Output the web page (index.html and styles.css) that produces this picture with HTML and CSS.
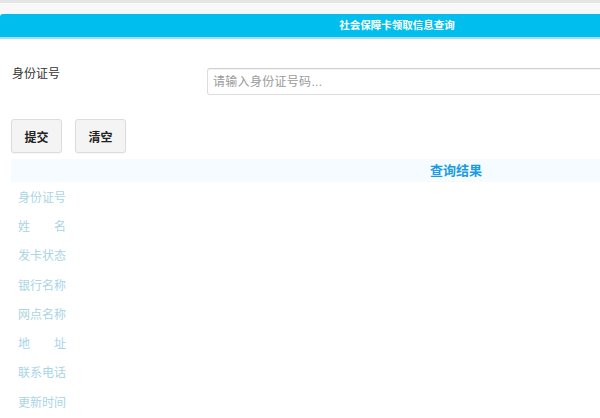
FILE: index.html
```html
<!DOCTYPE html>
<html lang="zh-CN">
<head>
    <meta charset="UTF-8">
    <meta name="viewport" content="width=device-width, initial-scale=1.0">
    <title>社会保障卡领取信息查询</title>
    <link rel="stylesheet" href="styles.css">
</head>
<body>
    <div class="page">
        <div class="header">社会保障卡领取信息查询</div>

        <form class="query-form">
            <div class="form-row">
                <label for="idcard">身份证号</label>
                <input type="text" id="idcard" name="idcard" placeholder="请输入身份证号码...">
            </div>
            <div class="actions">
                <button type="submit" class="btn">提交</button>
                <button type="reset" class="btn">清空</button>
            </div>
        </form>

        <div class="result">
            <div class="result-title">查询结果</div>
            <div class="result-row"><span class="result-label">身份证号</span><span class="result-value"></span></div>
            <div class="result-row"><span class="result-label">姓名</span><span class="result-value"></span></div>
            <div class="result-row"><span class="result-label">发卡状态</span><span class="result-value"></span></div>
            <div class="result-row"><span class="result-label">银行名称</span><span class="result-value"></span></div>
            <div class="result-row"><span class="result-label">网点名称</span><span class="result-value"></span></div>
            <div class="result-row"><span class="result-label">地址</span><span class="result-value"></span></div>
            <div class="result-row"><span class="result-label">联系电话</span><span class="result-value"></span></div>
            <div class="result-row"><span class="result-label">更新时间</span><span class="result-value"></span></div>
        </div>
    </div>
</body>
</html>
```

FILE: styles.css
```css
html, body {
    overflow-x: hidden;
}

body {
    margin: 0;
    font-family: "Liberation Sans", "Noto Sans CJK SC", sans-serif;
    font-size: 12px;
    color: #333;
    background-color: #fff;
    border-top: 3px solid #e6e6e6;
}

.page {
    width: 900px;
    padding-top: 11px;
    background-color: #fff;
    background-image: linear-gradient(#f8f8f8, #f8f8f8);
    background-size: 100% 11px;
    background-repeat: no-repeat;
}

.header {
    width: 794px;
    height: 23px;
    line-height: 23px;
    background-color: #00bfee;
    border-bottom: 2px solid #9fe0f4;
    border-top-left-radius: 3px;
    color: #fff;
    font-size: 10.5px;
    font-weight: bold;
    text-align: center;
}

.query-form {
    margin: 0;
}

.form-row {
    display: flex;
    align-items: flex-start;
    margin-top: 29px;
    padding-left: 12px;
}

.form-row label {
    width: 195px;
    margin-top: -1px;
    line-height: 14px;
    color: #333;
}

.form-row input[type="text"] {
    width: 690px;
    height: 27px;
    padding: 0 5px;
    border: 1px solid #dcdcdc;
    border-top-color: #cfcfcf;
    border-radius: 3px;
    box-sizing: border-box;
    font-family: inherit;
    font-size: 12px;
    color: #333;
    box-shadow: inset 0 1px 1px rgba(0, 0, 0, 0.05);
}

.form-row input::placeholder {
    color: #9a9a9a;
    letter-spacing: 0.3px;
}

.actions {
    display: flex;
    gap: 13px;
    margin-top: 24px;
    padding-left: 11px;
}

.btn {
    width: 51px;
    height: 34px;
    padding: 0;
    background-color: #f4f4f4;
    border: 1px solid #dcdcdc;
    border-radius: 3px;
    font-family: inherit;
    font-size: 12px;
    font-weight: bold;
    color: #222;
    box-shadow: 0 1px 1px rgba(0, 0, 0, 0.04);
}

.result {
    width: 890px;
    margin: 6px 0 0 11px;
}

.result-title {
    height: 23px;
    line-height: 23px;
    background-color: #f6fbff;
    color: #1a9be2;
    font-size: 13px;
    font-weight: bold;
    text-align: center;
}

.result-row {
    display: flex;
    align-items: center;
    height: 29.3px;
    margin-top: -0.5px;
    padding-left: 7px;
}

.result-row + .result-row {
    margin-top: 0;
}

.result-label {
    width: 48px;
    color: #a9d5e5;
    text-align: justify;
    text-align-last: justify;
}
```
